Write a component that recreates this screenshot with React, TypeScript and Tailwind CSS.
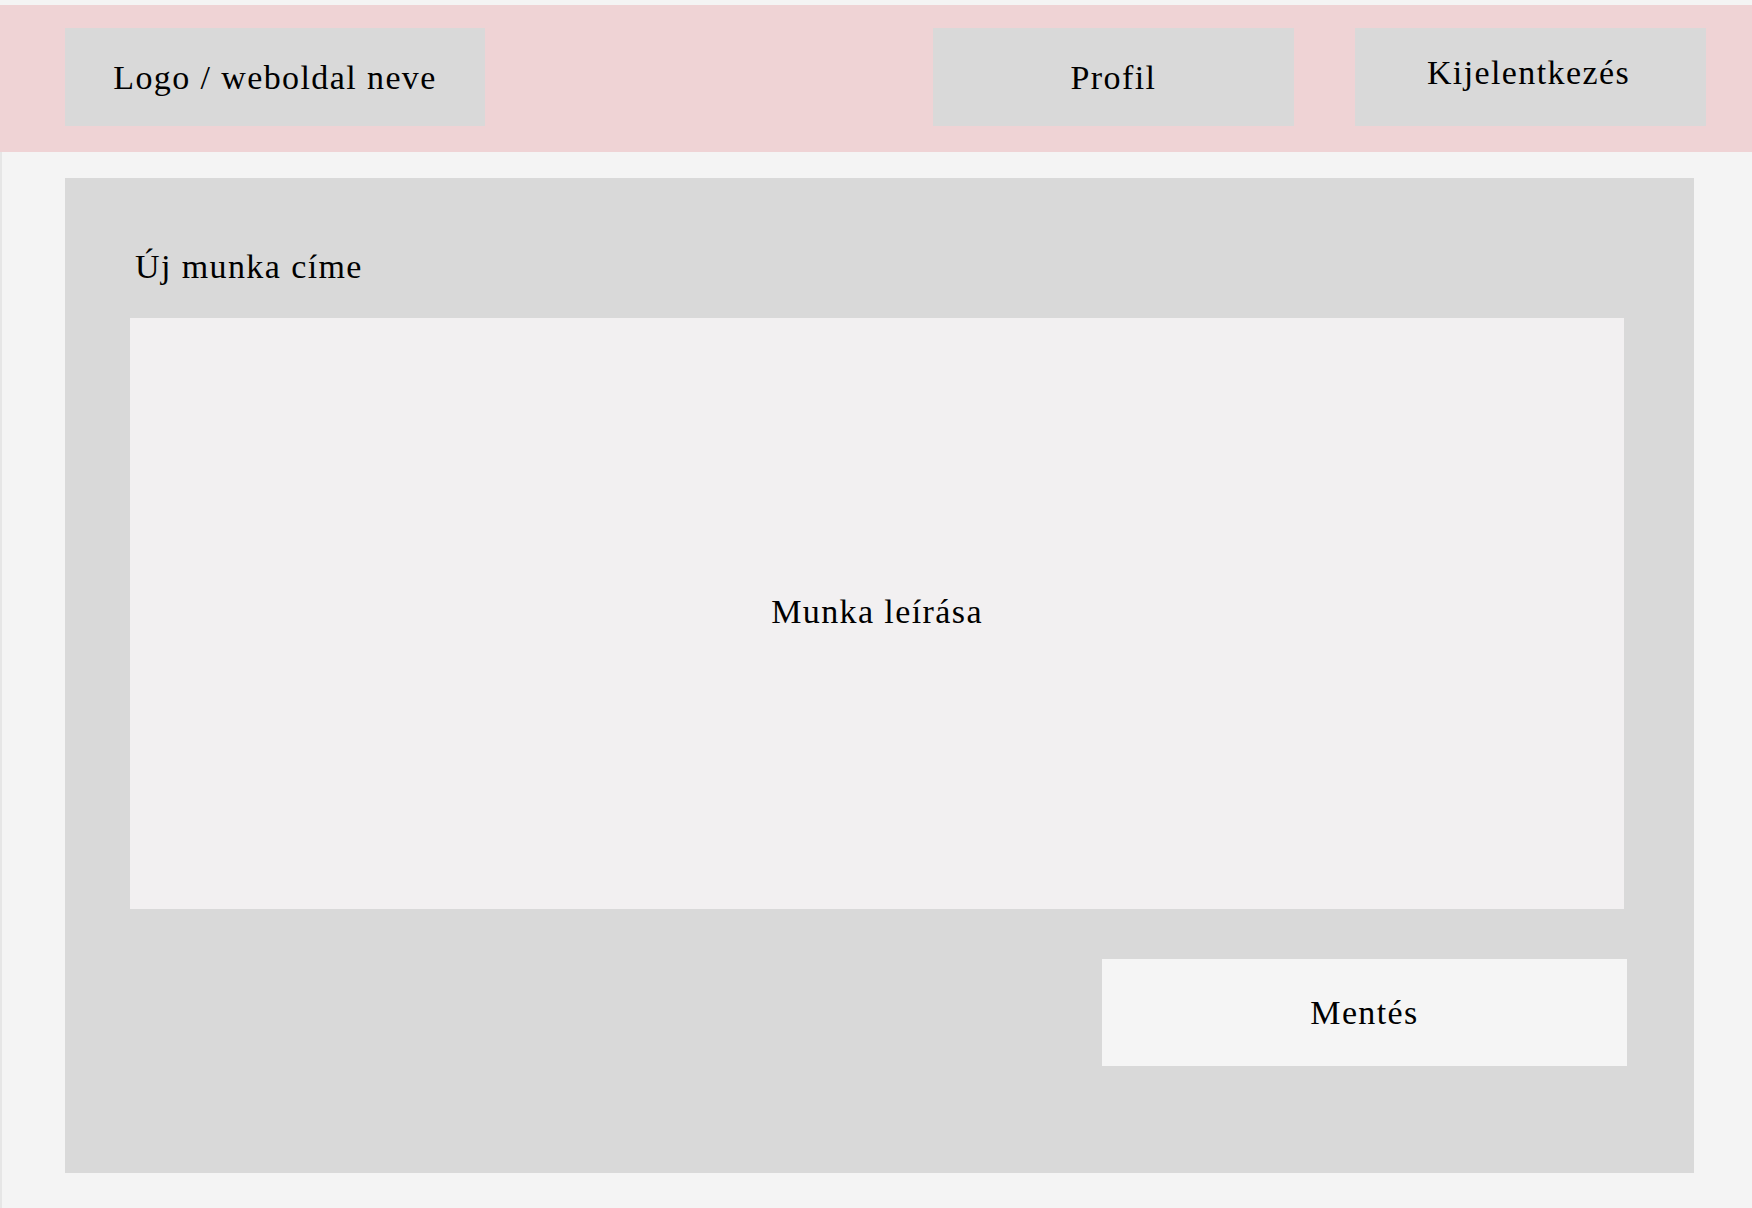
import React from "react";

const serif = { fontFamily: '"Liberation Serif", "Times New Roman", serif' };

export default function App() {
  return (
    <div
      className="w-[1752px] h-[1208px] bg-[#f4f4f4] flex flex-col text-[34px] tracking-[1.4px] text-black"
      style={serif}
    >
      <div className="h-[5px] shrink-0" />
      <header className="h-[147px] shrink-0 bg-[#efd3d5] flex items-start pt-[23px] pl-[65px] pr-[46px]">
        <div className="w-[420px] h-[98px] bg-[#d9d9d9] flex items-center justify-center">
          Logo / weboldal neve
        </div>
        <div className="ml-auto w-[361px] h-[98px] bg-[#d9d9d9] flex items-center justify-center">
          Profil
        </div>
        <div className="ml-[61px] w-[351px] h-[98px] bg-[#d9d9d9] flex items-center justify-center pb-[9px] pr-[4px]">
          Kijelentkezés
        </div>
      </header>
      <main className="flex-1 border-l-2 border-[#e6e6e6] pl-[63px] pt-[26px]">
        <section className="w-[1629px] h-[995px] bg-[#d9d9d9] pt-[69px] pl-[65px] pr-[70px] flex flex-col">
          <h1 className="leading-[40px] pl-[5px] font-normal">Új munka címe</h1>
          <div className="mt-[31px] h-[591px] bg-[#f2f0f1] flex items-center justify-center pb-[5px]">
            Munka leírása
          </div>
          <div className="mt-[50px] flex justify-end -mr-[3px]">
            <button className="w-[525px] h-[107px] bg-[#f5f5f5] flex items-center justify-center">
              Mentés
            </button>
          </div>
        </section>
      </main>
    </div>
  );
}
